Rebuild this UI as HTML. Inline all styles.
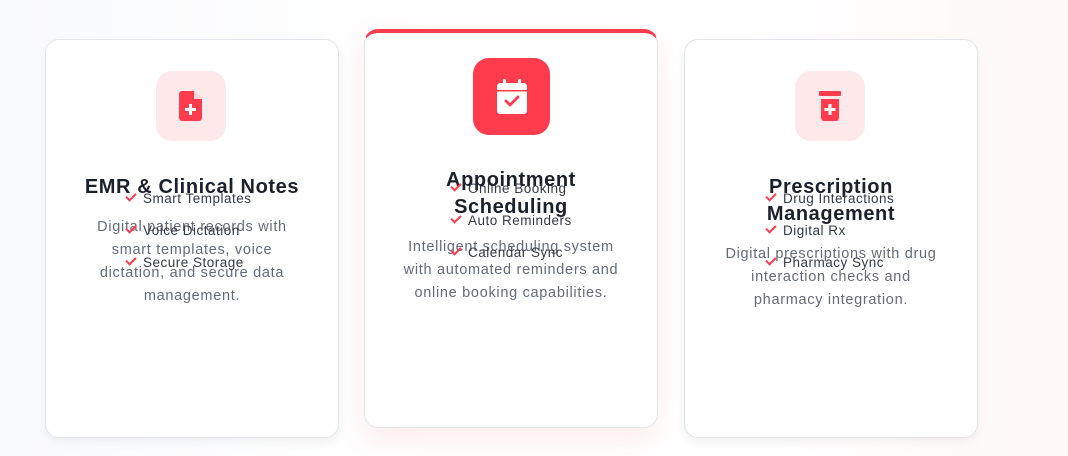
<!DOCTYPE html>
<html><head><meta charset="utf-8"><style>
*{margin:0;padding:0;box-sizing:border-box}
body{width:1068px;height:456px;overflow:hidden;background:linear-gradient(90deg,#f9fafc 0%,#fff 40%,#fff 70%,#fff8f8 100%);font-family:"Liberation Sans",sans-serif;position:relative}
.card{position:absolute;width:294px;height:399px;background:#fff;border:1px solid #e3e5ea;border-radius:14px;box-shadow:0 4px 10px rgba(0,0,0,0.06);overflow:hidden}
.c2{border-top:4px solid #ff3b4e;box-shadow:0 10px 30px rgba(255,59,78,0.10)}
.icon{position:absolute;border-radius:16px;display:flex;align-items:center;justify-content:center}
.title{position:absolute;left:-20px;right:-20px;top:134px;text-align:center;font-weight:bold;font-size:20px;line-height:27px;color:#1a202c;letter-spacing:0.6px}
.desc{margin-top:15px;font-weight:normal;font-size:14.5px;line-height:23px;color:#646b78;letter-spacing:0.7px}
.feat{position:absolute;top:143px;font-size:13.5px;color:#333a45;line-height:32px;letter-spacing:0.5px}
.feat div{position:relative;padding-left:19px;height:32px}
.feat div:before{content:"";position:absolute;left:2px;top:10px;width:8px;height:4px;border-left:2px solid #ff3b4e;border-bottom:2px solid #ff3b4e;transform:rotate(-45deg)}
</style></head><body>

<div class="card" style="left:45px;top:39px">
  <div class="icon" style="left:110px;top:31px;width:70px;height:70px;background:#fde8ea">
    <svg width="24" height="30" viewBox="0 0 24 30"><path d="M3 0h12l8 8v19a3 3 0 0 1-3 3H3a3 3 0 0 1-3-3V3a3 3 0 0 1 3-3z" fill="#ff3b4e"/><path d="M15 0v8h8z" fill="#fde8ea" opacity=".9"/><path d="M10 13h3v4h4v3h-4v4h-3v-4H6v-3h4z" fill="#fff"/></svg>
  </div>
  <div class="title">EMR &amp; Clinical Notes<div class="desc">Digital patient records with<br>smart templates, voice<br>dictation, and secure data<br>management.</div></div>
  <div class="feat" style="left:78px"><div>Smart Templates</div><div>Voice Dictation</div><div>Secure Storage</div></div>
</div>

<div class="card c2" style="left:364px;top:29px">
  <div class="icon" style="left:108px;top:25px;width:77px;height:77px;background:#ff3b4e">
    <svg width="32" height="36" viewBox="0 0 32 36"><rect x="7" y="0" width="3" height="7" rx="1.5" fill="#fff"/><rect x="22" y="0" width="3" height="7" rx="1.5" fill="#fff"/><rect x="1" y="4" width="30" height="31" rx="3" fill="#fff"/><rect x="1" y="11" width="30" height="1.5" fill="#ff3b4e"/><path d="M10 22l4 4 8-8" stroke="#ff3b4e" stroke-width="2.8" fill="none" stroke-linecap="round" stroke-linejoin="round"/></svg>
  </div>
  <div class="title">Appointment<br>Scheduling<div class="desc">Intelligent scheduling system<br>with automated reminders and<br>online booking capabilities.</div></div>
  <div class="feat" style="left:84px;top:140px"><div>Online Booking</div><div>Auto Reminders</div><div>Calendar Sync</div></div>
</div>

<div class="card" style="left:684px;top:39px">
  <div class="icon" style="left:110px;top:31px;width:70px;height:70px;background:#fde8ea">
    <svg width="22" height="30" viewBox="0 0 22 30"><rect x="0" y="0" width="22" height="5" rx="1" fill="#ff3b4e"/><path d="M2 8h18v19a3 3 0 0 1-3 3H5a3 3 0 0 1-3-3z" fill="#ff3b4e"/><path d="M9.5 13h3v4h4v3h-4v4h-3v-4h-4v-3h4z" fill="#fff"/></svg>
  </div>
  <div class="title">Prescription<br>Management<div class="desc">Digital prescriptions with drug<br>interaction checks and<br>pharmacy integration.</div></div>
  <div class="feat" style="left:79px"><div>Drug Interactions</div><div>Digital Rx</div><div>Pharmacy Sync</div></div>
</div>

</body></html>
